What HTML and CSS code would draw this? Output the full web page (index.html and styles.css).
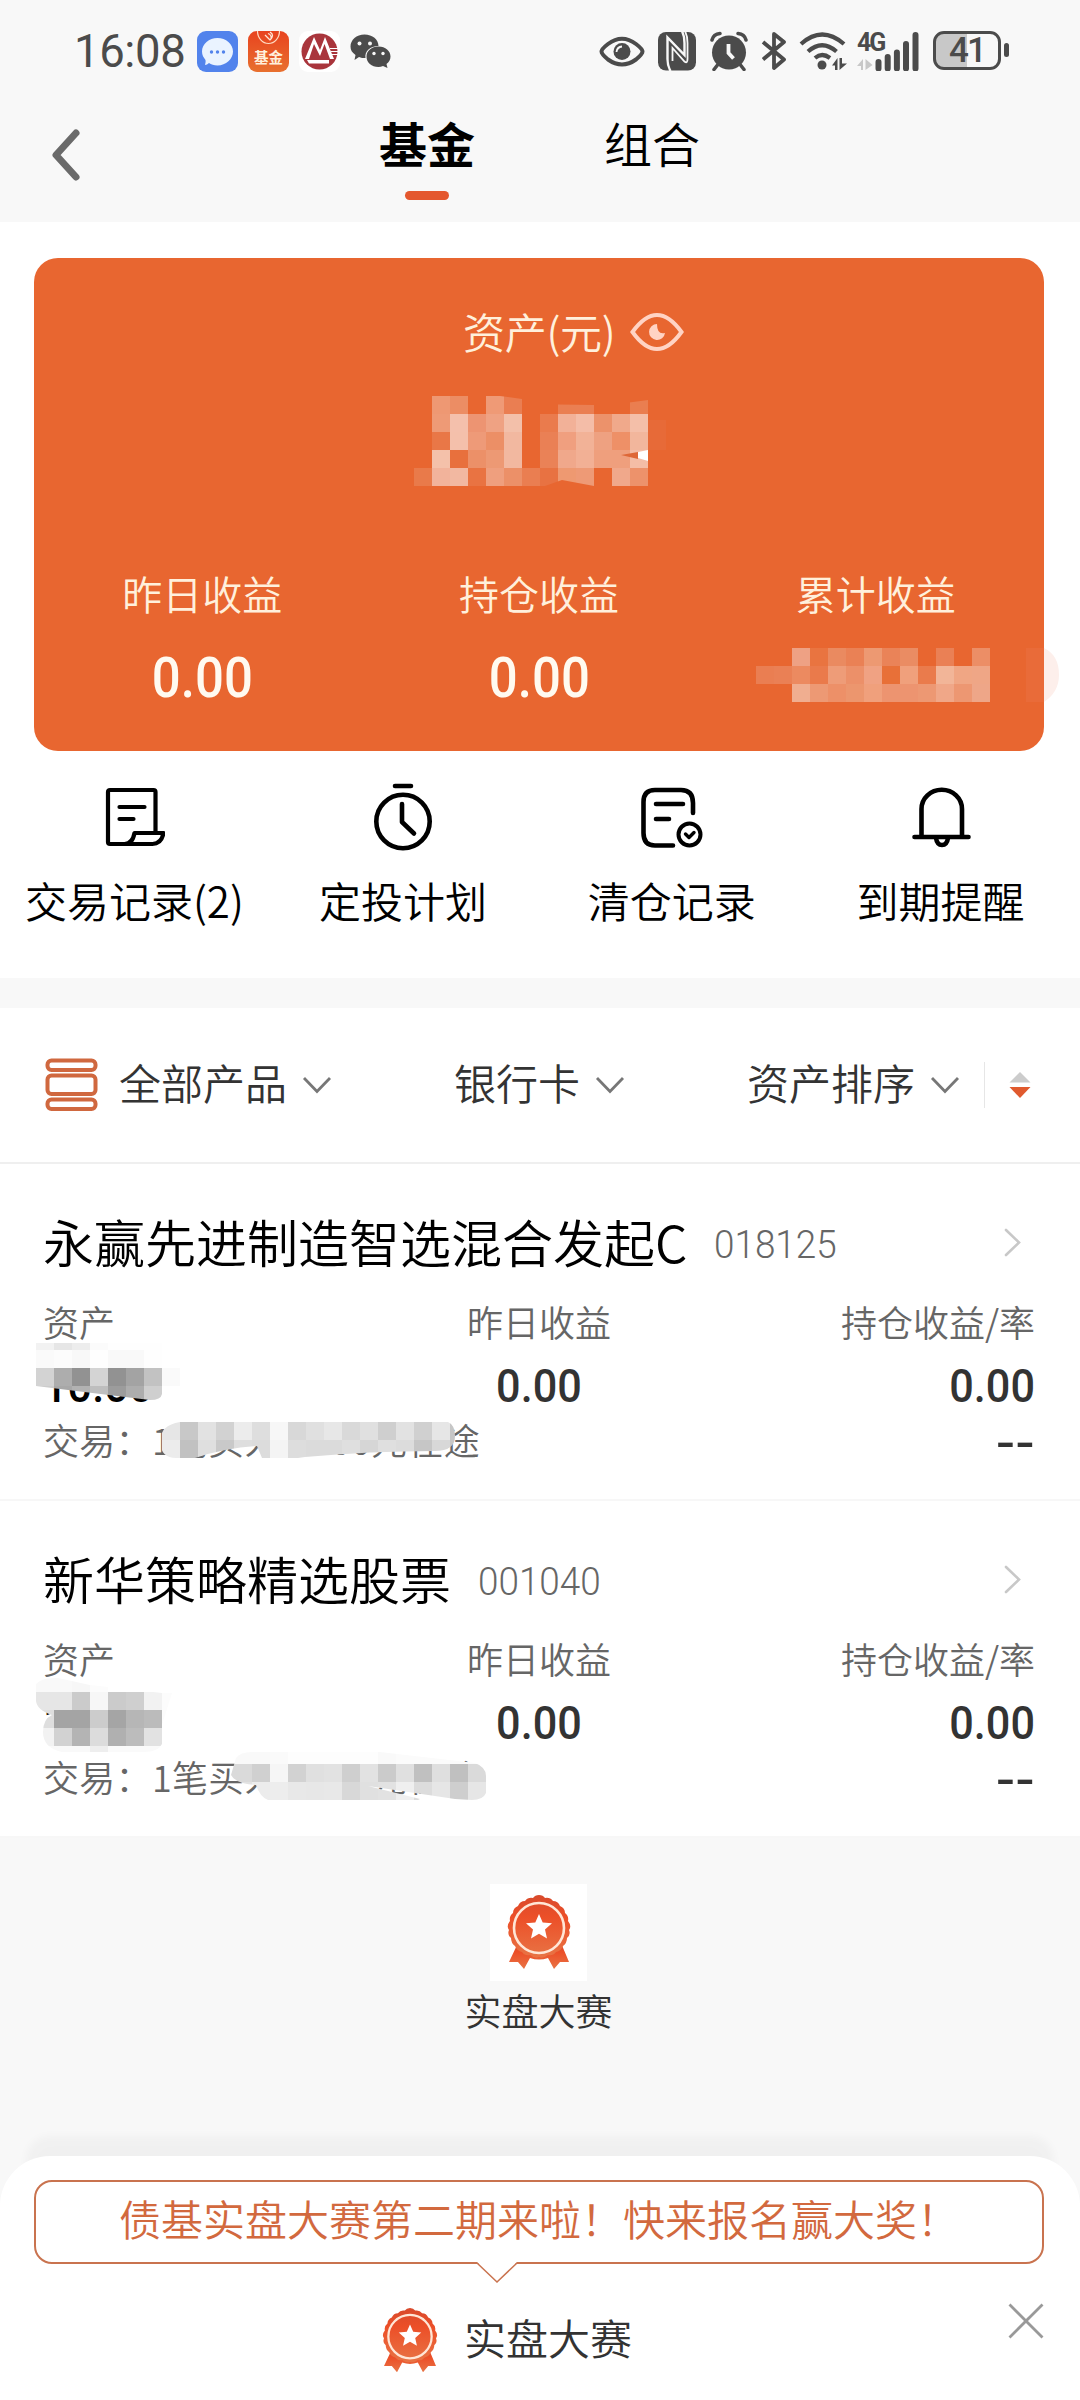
FILE: index.html
```html
<!DOCTYPE html>
<html lang="zh-CN">
  <head>
    <meta charset="UTF-8" />
    <meta name="viewport" content="width=device-width, initial-scale=1.0" />
    <title>基金</title>
    <link rel="stylesheet" href="styles.css">
  </head>
  <body>
    <!-- Iconos compartidos -->
    <svg class="defs" width="0" height="0">
      <defs>
        <linearGradient id="medal-fill" x1="0" y1="0" x2="0" y2="1">
          <stop offset="0" stop-color="#d84a2c" />
          <stop offset="0.35" stop-color="#ec4f28" />
          <stop offset="1" stop-color="#e87445" />
        </linearGradient>
        <symbol id="medal" viewBox="0 0 64 75">
          <path fill="url(#medal-fill)" d="M11 48 L2 67 L11 67 L17 74 L23 63 Q32 66 41 63 L47 74 L53 67 L62 67 L54 48 Z" />
          <path fill="url(#medal-fill)" d="M32 0 Q36 0 38 3 Q43 2 46 6 Q51 6 53 11 Q58 13 58 18 Q62 21 61 26 Q65 31 62 35 Q64 40 60 43 Q60 48 56 51 Q54 56 49 57 Q46 61 41 60 Q36 64 32 62 Q28 64 23 60 Q18 61 15 57 Q10 56 8 51 Q4 48 4 43 Q0 40 2 35 Q-1 31 3 26 Q2 21 6 18 Q6 13 11 11 Q13 6 18 6 Q21 2 26 3 Q28 0 32 0 Z" />
          <circle cx="32" cy="33" r="25" fill="none" stroke="#ffe6d6" stroke-width="2.6" />
          <path fill="#fff" d="M32 19 L35.7 27.4 L45 28.3 L38 34.5 L40 43.6 L32 38.8 L24 43.6 L26 34.5 L19 28.3 L28.3 27.4 Z" />
        </symbol>
        <symbol id="down" viewBox="0 0 30 18">
          <path d="M2 2 L15 15.500 L28 2" fill="none" stroke="#777" stroke-width="2.800" />
        </symbol>
        <symbol id="right" viewBox="0 0 18 29">
          <path d="M2 2 L15 14.500 L2 27" fill="none" stroke="#c8c8c8" stroke-width="2.600" stroke-linecap="round" />
        </symbol>
      </defs>
    </svg>

    <header class="header">
      <div class="status">
        <div class="status-left">
          <span class="clock">16:08</span>
          <svg width="41" height="41" viewBox="0 0 41 41">
            <rect width="41" height="41" rx="9" fill="#5283ec" />
            <path d="M20.500 7 C29 7 36 13 36 20.500 C36 28 29 34.500 20.500 34.500 C17 34.500 14 33.500 12 32 Q10 34 8 34 Q9 31 8.500 29 C6.500 26.500 5 24 5 20.500 C5 13 12 7 20.500 7 Z" fill="#eaf3ff" />
            <circle cx="14.500" cy="21" r="1.700" fill="#5283ec" />
            <circle cx="20.500" cy="21" r="1.700" fill="#5283ec" />
            <circle cx="26.500" cy="21" r="1.700" fill="#5283ec" />
          </svg>
          <div class="app-fund">
            <svg width="41" height="16" viewBox="0 0 41 16">
              <path d="M9.500 0 A11 12.500 0 0 0 31.500 0" fill="none" stroke="#ffd9c0" stroke-width="1.200" />
              <path d="M17 4 L22 9 M20 2.500 Q24 4 23 8 M22 1 Q27 4 22 9" fill="none" stroke="#ffe6d6" stroke-width="1.300" />
            </svg>
            <span>基金</span>
          </div>
          <svg width="41" height="41" viewBox="0 0 41 41">
            <rect width="41" height="41" rx="9" fill="#fff" />
            <circle cx="20.500" cy="20.500" r="18" fill="#a9353c" />
            <path d="M6 28 L15 6 L21 19 L26 6 L35 28 L31 28 L25.500 13 L21 25 L15 13 L10 28 Z M8 29 H30 V32.500 H10 Z" fill="#fff" />
            <path d="M31 17.500 H39 M32 20.500 H39 M33 23.500 H39" stroke="#fff" stroke-width="1.200" />
          </svg>
          <svg width="42" height="41" viewBox="0 0 42 41">
            <g fill="#4b4b4b">
              <path d="M14.500 3.500 C22.500 3.500 28.500 8.500 28.500 15 C20 15 14.500 20 15.500 27 C13 27 11 27 9 26 L4.500 29 L5.500 24 C2 21.500 0.500 19 0.500 15.500 C0.500 9 6.500 3.500 14.500 3.500 Z" />
              <path d="M28.500 15.500 C35.500 15.500 40.500 20 40.500 25.500 C40.500 29 39 31 36.500 33 L37.500 37 L33 35 C31.500 35.500 30 36 28.500 36 C21.500 36 16.500 31.500 16.500 25.500 C16.500 20 21.500 15.500 28.500 15.500 Z" />
            </g>
            <g fill="#f8f8f8">
              <circle cx="9.500" cy="12.500" r="2" /><circle cx="20" cy="12.500" r="2" />
              <circle cx="24" cy="22.500" r="1.700" /><circle cx="33" cy="22.500" r="1.700" />
            </g>
          </svg>
        </div>

        <!-- Iconos del sistema -->
        <div class="status-right">
          <svg width="46" height="40" viewBox="0 0 46 40">
            <path d="M2.500 20.500 Q2.500 18 9 13 Q23 2.500 37 13 Q43.500 18 43.500 20.500 Q43.500 23 37 28.500 Q23 38.500 9 28.500 Q2.500 23 2.500 20.500 Z" fill="none" stroke="#4b4b4b" stroke-width="4" />
            <circle cx="23" cy="20.500" r="8.500" fill="#4b4b4b" />
            <path d="M17.500 21 Q18 16 23 15.500" fill="none" stroke="#f8f8f8" stroke-width="1.800" />
          </svg>
          <svg class="nfc" width="38" height="40" viewBox="0 0 38 40">
            <rect y="1" width="38" height="38.500" rx="8" fill="#4b4b4b" />
            <path d="M12.500 40 Q9.500 35 9.500 28 V6.500 L26.500 24 V12 Q26.500 5 24 0" fill="none" stroke="#f8f8f8" stroke-width="2.400" />
            <path d="M14.500 30 V17 L26.500 30.500 Q29.500 33 29.500 28 V12 Q29.500 5 27 0" fill="none" stroke="#f8f8f8" stroke-width="1.800" />
          </svg>
          <svg class="alarm" width="38" height="40" viewBox="0 0 38 40">
            <circle cx="19" cy="21.500" r="17" fill="#4b4b4b" />
            <path d="M2 9 Q3.500 3 10 2.500 M28 2.500 Q34.500 3 36 9 M7.500 34 L4 38.500 M30.500 34 L34 38.500" fill="none" stroke="#4b4b4b" stroke-width="3.500" stroke-linecap="round" />
            <path d="M18.500 13 V22 L23.500 27.500" fill="none" stroke="#f8f8f8" stroke-width="3.800" />
          </svg>
          <svg class="bt" width="26" height="40" viewBox="0 0 26 40">
            <path d="M2 11 L23 28.500 L13 37 V3 L23 11 L2 28.500" fill="none" stroke="#4b4b4b" stroke-width="3.800" stroke-linejoin="round" />
          </svg>
          <svg class="wifi" width="48" height="40" viewBox="0 0 48 40">
            <path d="M2 13 Q23 -6 45 13 M9 20.500 Q23 8 37.500 20.500 M16 27 Q23 21 31 27" fill="none" stroke="#4b4b4b" stroke-width="4.200" />
            <circle cx="23" cy="34" r="4.500" fill="#4b4b4b" />
            <path d="M33 34.500 L38.500 27 V39 H36 V34.500 Z M40.500 39 V27 H43 V32.500 H48 Z" fill="#4b4b4b" />
          </svg>
          <div class="signal">
            <span>4G</span>
            <svg width="63" height="40" viewBox="0 0 63 40">
              <path d="M0 35 L6 28 V39 H4 V35 Z M8.500 39 V28 L15.500 34 Z" fill="#c8c8c8" />
              <path d="M21.500 31 V37.500 M30.700 26 V37.500 M39.900 21.500 V37.500 M49 13 V37.500 M58.500 4 V37.500" stroke="#4b4b4b" stroke-width="6" stroke-linecap="round" />
            </svg>
          </div>
          <div class="battery"><span>41</span></div>
          <i class="battery-tip"></i>
        </div>
      </div>

      <nav class="tabs">
        <svg class="back" width="32" height="56" viewBox="0 0 32 56">
          <path d="M26 6 L6 28 L26 50" fill="none" stroke="#6a6a6a" stroke-width="7" stroke-linecap="round" stroke-linejoin="round" />
        </svg>
        <div class="tab active">基金</div>
        <div class="tab">组合</div>
      </nav>
    </header>

    <section class="overview">
      <div class="card">
        <div class="card-title">
          <span>资产(元)</span>
          <svg width="54" height="40" viewBox="0 0 54 40">
            <path d="M2.500 20 Q27 -14 51.500 20 Q27 54 2.500 20 Z" fill="none" stroke="#ffd3c4" stroke-width="4" />
            <path d="M27 12 A8 8 0 1 0 35 21 Q27 23 27 12 Z" fill="#ffd3c4" />
          </svg>
        </div>
        <svg class="mask mask-total" viewBox="414 396 252 90" data-mask="total"></svg>
        <div class="stats">
          <div class="stat"><span>昨日收益</span><b>0.00</b></div>
          <div class="stat"><span>持仓收益</span><b>0.00</b></div>
          <div class="stat"><span>累计收益</span></div>
        </div>
        <svg class="mask mask-sum" viewBox="756 648 306 54" data-mask="sum"></svg>
      </div>

      <div class="actions">
        <div class="action">
          <svg width="62" height="74" viewBox="-2.500 0 62 74" fill="none" stroke="#000" stroke-width="4.200" stroke-linecap="round" stroke-linejoin="round">
            <path d="M50 55 V14 Q50 12 48 12 H4.500 Q2.500 12 2.500 14 V64 Q2.500 66 4.500 66 H47 Q56 66 58 55 H29 Q27 66 19 66" />
            <path d="M14 29 H39 M14 41 H28" />
          </svg>
          <span>交易记录(2)</span>
        </div>
        <div class="action">
          <svg width="62" height="74" viewBox="0 0 62 74" fill="none" stroke="#000" stroke-width="4.600" stroke-linecap="round" stroke-linejoin="round">
            <circle cx="31" cy="43.500" r="26.700" />
            <path d="M23 8 H39 M30 26 V44 L42 55.500" />
          </svg>
          <span>定投计划</span>
        </div>
        <div class="action">
          <svg width="62" height="74" viewBox="0 0 62 74" fill="none" stroke="#000" stroke-width="4.600" stroke-linecap="round" stroke-linejoin="round">
            <path d="M52 35 V25 Q52 12 40 12 H14 Q2.500 12 2.500 24 V55 Q2.500 67.500 14 67.500 H32" />
            <path d="M15 26 H42 M15 41 H28" />
            <circle cx="48.500" cy="56.500" r="11" stroke-width="4" />
            <path d="M44.500 56 L48 59.500 L53 54.500" stroke-width="3.400" />
          </svg>
          <span>清仓记录</span>
        </div>
        <div class="action">
          <svg width="62" height="74" viewBox="-1 0 62 74" fill="none" stroke="#000" stroke-width="4.600" stroke-linecap="round">
            <path d="M3.500 59 H57.500 M10.500 58 V31 A20 19 0 0 1 51 31 V58" />
            <path d="M25 60 Q26 67 31 67 Q36 67 37 60" />
          </svg>
          <span>到期提醒</span>
        </div>
      </div>
    </section>

    <section class="filters">
      <svg class="stack" width="54" height="54" viewBox="0 0 54 54" fill="none" stroke="#d0683f" stroke-width="4">
        <rect x="2.500" y="2.500" width="48" height="9.500" rx="4" />
        <rect x="2.500" y="17.500" width="48" height="18.500" rx="4" />
        <rect x="2.500" y="41.500" width="48" height="9.500" rx="4" />
      </svg>
      <span class="filter all">全部产品</span>
      <svg class="arrow" width="30" height="18"><use href="#down" /></svg>
      <span class="filter bank">银行卡</span>
      <svg class="arrow" width="30" height="18"><use href="#down" /></svg>
      <span class="filter sort">资产排序</span>
      <svg class="arrow" width="30" height="18"><use href="#down" /></svg>
      <div class="order">
        <svg width="22" height="28" viewBox="0 0 22 28">
          <path d="M0.500 11.500 L11 1 L21.500 11.500 Z" fill="#ccc" />
          <path d="M0.500 16 H21.500 L11 27 Z" fill="#e05a2e" />
        </svg>
      </div>
    </section>

    <section class="fund">
      <div class="fund-head">
        <h2>永赢先进制造智选混合发起C</h2>
        <span class="code">018125</span>
        <svg class="go" width="18" height="29"><use href="#right" /></svg>
      </div>
      <div class="fund-row labels"><span>资产</span><span>昨日收益</span><span>持仓收益/率</span></div>
      <div class="fund-row values"><b class="own">10.00</b><b>0.00</b><b>0.00</b></div>
      <div class="fund-row trade"><span>交易：1笔买入10.00元在途</span><b>--</b></div>
      <svg class="mask mask-asset" viewBox="36 1343 144 60" data-mask="asset1"></svg>
      <svg class="mask mask-trade" viewBox="160 1422 296 36" data-mask="trade1"></svg>
    </section>

    <section class="fund">
      <div class="fund-head">
        <h2>新华策略精选股票</h2>
        <span class="code">001040</span>
        <svg class="go" width="18" height="29"><use href="#right" /></svg>
      </div>
      <div class="fund-row labels"><span>资产</span><span>昨日收益</span><span>持仓收益/率</span></div>
      <div class="fund-row values"><b class="own">10.00</b><b>0.00</b><b>0.00</b></div>
      <div class="fund-row trade"><span>交易：1笔买入10.00元在途</span><b>--</b></div>
      <svg class="mask mask-asset2" viewBox="36 1677 144 75" data-mask="asset2"></svg>
      <svg class="mask mask-trade2" viewBox="230 1752 258 48" data-mask="trade2"></svg>
    </section>

    <section class="contest">
      <div class="contest-icon"><svg width="64" height="75"><use href="#medal" /></svg></div>
      <span>实盘大赛</span>
    </section>

    <footer class="sheet">
      <div class="bubble">
        债基实盘大赛第二期来啦！快来报名赢大奖！
        <svg class="tail" width="42" height="22" viewBox="0 0 42 22">
          <path d="M1 0 H41 L21 20 Z" fill="#fff" />
          <path d="M1 1 L21 20 L41 1" fill="none" stroke="#c9734f" stroke-width="1.500" />
        </svg>
      </div>
      <div class="sheet-row">
        <svg width="56" height="65"><use href="#medal" /></svg>
        <span>实盘大赛</span>
        <svg class="close" width="36" height="36" viewBox="0 0 36 36">
          <path d="M1.500 1.500 L34.500 34.500 M34.500 1.500 L1.500 34.500" stroke="#999" stroke-width="2.800" />
        </svg>
      </div>
    </footer>

    <script>
      // Bloques de 18px que tapan los importes: [x, y, alto, colores]
      const masks = {
        total: {
          clip: "M414 396 H500 L522 399 V404 L594 405 L618 404 L648 400 V420 H666 V486 H594 L562 480 L545 486 H414 Z",
          rows: [
            [432, 396, 18, "ee9873 ec8d64 - ef9a76 ea7e52 - - ea7f52 ea7f53 - - ea7e50"],
            [432, 414, 18, "ee9a76 f4c0ac ed9472 efa283 f3c0aa - ea7b4d f2b198 f4bda8 ec926b f0a98b f4bfa9 e76a38"],
            [432, 432, 18, "e97747 f4c0ab ee9a78 ec8f66 f2b8a0 - ea8055 f09f7f f2b297 eea181 ee9067 f2b69c e76a38"],
            [432, 450, 18, "f4c1aa e8703d ec9068 ed9974 f2b8a0 - ea8257 f0a88b f2b095 ef9f7d ef9f7d f4bda6"],
            [414, 468, 18, "e97a4a f2b39b f2b8a1 e97342 ef9f7e ec9068 ea7e51 e87242 ee9971 ee9a76 - f0a88b ed926b"],
          ],
          extra: '<path d="M621 455 L638 452 V459 Z" fill="#de6838"/><path d="M638 452 L648 450 V461 L638 458 Z" fill="#fff"/>',
        },
        sum: {
          clip: "M756 648 H1044 Q1059 655 1059 675 Q1059 692 1044 702 H756 Z",
          rows: [
            [792, 648, 18, "eea184 e97440 ea8a60 ea8155 ed9972 ea8358 ea8c63 - ea8055 - ec8e66"],
            [756, 666, 18, "ea7e52 ea8055 ec8a60 ea7a4b ee9c78 ec9069 f0a283 e87038 f0a07c ea7b4c f2b598 f0a684 efa686"],
            [792, 684, 18, "f0ae90 ed9974 ed9068 ec966e f0a07c ed9470 ed9470 ed9873 f0a788 ed9772 eea688"],
            [1026, 648, 54, "e96b39"],
            [1044, 648, 54, "fdefeb"],
          ],
        },
        asset1: {
          clip: "M36 1343 H162 V1368 H180 V1386 H162 V1394 Q161 1400 150 1400 Q100 1394 36 1386 Z",
          rows: [
            [36, 1343, 7, "f2f2f2 e6e6e6 ededed fbfbfb fefefe fefefe fefefe"],
            [36, 1350, 18, "fafafa fcfcfc f8f8f8 fefefe f9f9f9 f9f9f9 fefefe"],
            [36, 1368, 18, "d3d3d3 adadad 929292 d4d4d4 929292 a3a3a3 c2c2c2 fafafa"],
            [36, 1386, 17, "cccccc a8a8a8 b2b2b2 bebebe 9c9c9c adadad cfcfcf"],
          ],
        },
        trade1: {
          clip: "M180 1422 H448 Q455 1425 455 1436 Q455 1451 435 1451 Q370 1451 305 1457 L298 1458 H262 L257 1446 Q225 1448 195 1458 H176 Q161 1458 160 1442 Q160 1425 180 1422 Z",
          rows: [
            [162, 1422, 18, "e6e6e6 c8c8c8 e2e2e2 d2d2d2 ececec dedede f7f7f7 d8d8d8 e0e0e0 e7e7e7 d9d9d9 e0e0e0 cfcfcf e2e2e2 d0d0d0 e6e6e6 c6c6c6"],
            [162, 1440, 18, "ececec c1c1c1 dfdfdf c9c9c9 dedede dcdcdc f4f4f4 dddddd dbdbdb dbdbdb dfdfdf d6d6d6 dfdfdf dcdcdc c6c6c6 d8d8d8 c6c6c6"],
          ],
        },
        asset2: {
          clip: "M36 1684 Q42 1677 58 1678 L90 1685 L162 1693 H172 L162 1725 V1744 Q158 1752 144 1752 H62 Q43 1748 43 1732 Q43 1719 52 1715 Q37 1710 36 1701 Z",
          rows: [
            [36, 1677, 15, "f9f9f9 f9f9f9 f7f7f7 fcfcfc"],
            [36, 1692, 18, "e6e6e6 e6e6e6 cbcbcb f7f7f7 cbcbcb cfcfcf f2f2f2 fcfcfc"],
            [36, 1710, 18, "dedede a4a4a4 a4a4a4 cccccc a5a5a5 b6b6b6 bbbbbb fcfcfc"],
            [36, 1728, 18, "f2f2f2 d2d2d2 b4b4b4 dcdcdc b0b0b0 bcbcbc e2e2e2"],
            [36, 1746, 6, "f9f9f9 f9f9f9 f9f9f9 eeeeee fafafa fafafa fafafa"],
          ],
        },
        trade2: {
          clip: "M236 1758 Q240 1752 252 1752 H380 L475 1763 Q486 1767 486 1776 V1793 Q483 1800 472 1800 L455 1799 L368 1786 L420 1799 L418 1800 H268 Q260 1797 256 1785 Q236 1784 231 1775 Z",
          rows: [
            [234, 1752, 12, "f9f9f9 f9f9f9 fafafa fdfdfd fdfdfd fdfdfd fdfdfd fdfdfd f9f9f9 fbfbfb fbfbfb fbfbfb fbfbfb fbfbfb"],
            [216, 1764, 18, "dadada dadada d0d0d0 f6f6f6 d2d2d2 e0e0e0 e2e2e2 cfcfcf e2e2e2 cbcbcb e0e0e0 c0c0c0 dfdfdf c0c0c0 dadada"],
            [234, 1782, 18, "e2e2e2 ececec ededed e8e8e8 e7e7e7 e8e8e8 d8d8d8 e0e0e0 e2e2e2 efefef dcdcdc e6e6e6 cecece e6e6e6"],
          ],
        },
      };

      document.querySelectorAll("[data-mask]").forEach((svg) => {
        const name = svg.dataset.mask;
        const mask = masks[name];
        let html = `<clipPath id="clip-${name}"><path d="${mask.clip}"/></clipPath>`;
        html += `<g clip-path="url(#clip-${name})" shape-rendering="crispEdges">`;
        mask.rows.forEach(([x, y, h, colors]) => {
          colors.split(" ").forEach((c, i) => {
            if (c !== "-") {
              html += `<rect x="${x + i * 18}" y="${y}" width="18" height="${h}" fill="#${c}"/>`;
            }
          });
        });
        svg.innerHTML = html + "</g>" + (mask.extra || "");
      });
    </script>
  </body>
</html>
```

FILE: styles.css
```css
* {
  box-sizing: border-box;
}

body {
  margin: 0;
  width: 1080px;
  height: 2400px;
  display: flex;
  flex-direction: column;
  overflow: hidden;
  background-color: #f8f8f8;
  color: #000;
  font-family: "Noto Sans CJK SC", sans-serif;
  font-size: 42px;
  font-weight: 350;
  line-height: 60px;
  white-space: nowrap;
}

svg {
  display: block;
  flex-shrink: 0;
}

.defs {
  position: absolute;
}

/* Barra de estado */
.header {
  height: 222px;
}

.status {
  display: flex;
  justify-content: space-between;
  height: 72px;
  padding: 31px 71px 0 74px;
}

.status-left,
.status-right {
  display: flex;
}

.status-left {
  gap: 10px;
}

.clock {
  width: 113px;
  color: #4b4b4b;
  font-family: Roboto, sans-serif;
  font-size: 45.5px;
  font-weight: 400;
  line-height: 41px;
  letter-spacing: -0.4px;
}

.app-fund {
  width: 41px;
  height: 41px;
  border-radius: 9px;
  background: linear-gradient(#e8431f, #e8702f);
  overflow: hidden;
}

.app-fund span {
  display: block;
  margin-top: -1px;
  color: #fff0dc;
  font-size: 14.5px;
  font-weight: bold;
  line-height: 22px;
  text-align: center;
}

.nfc {
  margin-left: 13px;
}

.alarm {
  margin-left: 14px;
}

.bt {
  margin-left: 13px;
}

.wifi {
  margin-left: 12px;
}

.signal {
  position: relative;
  margin-left: 10px;
}

.signal span {
  position: absolute;
  left: 0;
  top: 0;
  color: #4b4b4b;
  font-family: Roboto, sans-serif;
  font-size: 25px;
  font-weight: bold;
  line-height: 23px;
  letter-spacing: -2px;
}

.battery {
  width: 68px;
  height: 39px;
  margin-left: 13px;
  border: 3.5px solid #4b4b4b;
  border-radius: 11px;
  background: linear-gradient(90deg, #c8c8c8 50%, transparent 50%);
  color: #4b4b4b;
  font-family: Roboto, sans-serif;
  font-size: 35px;
  font-weight: 500;
  line-height: 33px;
  letter-spacing: -2px;
  text-align: center;
}

.battery-tip {
  width: 5px;
  height: 14px;
  margin: 12px 0 0 3px;
  border-radius: 2.5px;
  background-color: #4b4b4b;
}

/* Pestañas */
.tabs {
  display: flex;
  padding-left: 50px;
}

.back {
  margin-top: 55px;
}

.tab {
  margin-top: 40px;
  margin-left: 129px;
  font-size: 48px;
}

.tab.active {
  margin-left: 297px;
  font-weight: bold;
}

.tab.active::after {
  content: "";
  display: block;
  width: 44px;
  height: 9px;
  margin: 19px auto 0;
  border-radius: 5px;
  background-color: #e4572e;
}

/* Resumen */
.overview {
  height: 756px;
  padding-top: 36px;
  background-color: #fff;
}

.card {
  position: relative;
  width: 1010px;
  height: 493px;
  margin-left: 34px;
  padding-top: 45px;
  border-radius: 24px;
  background-color: #e86630;
  color: #fff0dc;
}

.card-title {
  display: flex;
  align-items: center;
  gap: 15px;
  padding-left: 429px;
}

.card-title span {
  margin-top: -2px;
  letter-spacing: -0.3px;
}

.mask {
  position: absolute;
}

.mask-total {
  left: 380px;
  top: 138px;
  width: 252px;
  height: 90px;
}

.mask-sum {
  left: 722px;
  top: 390px;
  width: 306px;
  height: 54px;
}

.stats {
  display: flex;
  margin-top: 202px;
  font-size: 40px;
}

.stat {
  flex: 1;
  text-align: center;
}

.stat span,
.stat b {
  display: block;
}

.stat b {
  margin-top: 25px;
  color: #fffaf0;
  font-family: Roboto, sans-serif;
  font-size: 56px;
  font-weight: 500;
  transform: scaleX(0.91);
}

.actions {
  display: flex;
  width: 1075px;
  padding-top: 27px;
}

.action {
  flex: 1;
  display: flex;
  flex-direction: column;
  align-items: center;
  gap: 18px;
}

/* Filtros */
.filters {
  display: flex;
  align-items: center;
  height: 156px;
  margin-top: 30px;
  padding-left: 45px;
  border-bottom: 2px solid #efefef;
  background-color: #fff;
  color: #333;
}

.filter {
  margin-top: -6px;
}

.all {
  margin-left: 20px;
}

.bank {
  margin-left: 122px;
}

.sort {
  margin-left: 122px;
}

.arrow {
  margin-left: 15px;
}

.order {
  display: flex;
  align-items: center;
  height: 46px;
  margin-left: 24px;
  padding-left: 24px;
  border-left: 1px solid #e6e6e6;
}

/* Fondos */
.fund {
  position: relative;
  height: 337px;
  padding: 42px 45px 0 43px;
  border-bottom: 2px solid #f7f7f7;
  background-color: #fff;
}

.fund-head {
  display: flex;
  align-items: center;
  height: 70px;
}

.fund-head h2 {
  margin: 0;
  font-size: 51px;
  font-weight: inherit;
}

.code {
  margin: 8px 0 0 27px;
  color: #666;
  font-family: Roboto, sans-serif;
  font-size: 38px;
  font-weight: 350;
  transform: scaleX(0.97);
  transform-origin: left;
}

.go {
  margin-top: 3px;
  margin-left: auto;
  margin-right: 13px;
}

.fund-row {
  display: grid;
  grid-template-columns: 330px 332px 330px;
}

.fund-row > :nth-child(2) {
  text-align: center;
}

.fund-row > :last-child {
  text-align: right;
}

.labels {
  margin-top: 15px;
  color: #666;
  font-size: 36px;
  line-height: 60px;
}

.values {
  padding-top: 5px;
  color: #333;
  font-family: Roboto, sans-serif;
  font-size: 47px;
}

.values b,
.trade b {
  font-weight: 500;
}

.values b {
  transform: scaleX(0.92);
}

.values b:last-child {
  transform-origin: right;
}

.values .own {
  color: #000;
  transform-origin: left;
}

.trade {
  grid-template-columns: 1fr auto;
  margin-top: -5px;
  color: #666;
  font-size: 36px;
  line-height: 56px;
  letter-spacing: 0.3px;
}

.trade b {
  padding-top: 4px;
  color: #333;
  font-family: Roboto, sans-serif;
  font-size: 46px;
  transform: scaleX(1.22);
  transform-origin: right;
}

.mask-asset {
  left: 36px;
  top: 179px;
  width: 144px;
  height: 60px;
}

.mask-trade {
  left: 160px;
  top: 258px;
  width: 296px;
  height: 36px;
}

.mask-asset2 {
  left: 36px;
  top: 176px;
  width: 144px;
  height: 75px;
}

.mask-trade2 {
  left: 230px;
  top: 251px;
  width: 258px;
  height: 48px;
}

/* Concurso */
.contest {
  display: flex;
  flex-direction: column;
  align-items: center;
  width: 1077px;
  height: 318px;
  padding-top: 46px;
  color: #333;
  font-size: 37px;
}

.contest-icon {
  width: 97px;
  height: 97px;
  padding: 11px 0 0 17px;
  background-color: #fff;
}

.contest span {
  margin-top: -1px;
}

/* Panel inferior */
.sheet {
  flex: 1;
  padding: 24px 36px 0 34px;
  border-radius: 50px 50px 0 0;
  background-color: #fff;
  box-shadow: 0 -46px 8px -26px rgba(0, 0, 0, 0.03);
}

.bubble {
  position: relative;
  height: 84px;
  padding-left: 83px;
  border: 2px solid #c9734f;
  border-radius: 18px;
  color: #d2693e;
  line-height: 72px;
}

.tail {
  position: absolute;
  left: 440px;
  top: 80px;
}

.sheet-row {
  display: flex;
  align-items: flex-start;
  padding: 44px 0 0 348px;
  color: #333;
}

.sheet-row span {
  margin: -1px 0 0 26px;
}

.close {
  margin-left: auto;
  margin-top: -5px;
}
```
